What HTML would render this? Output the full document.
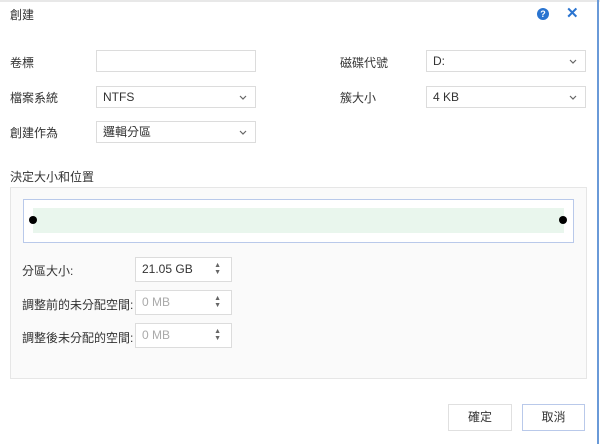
<!DOCTYPE html>
<html><head><meta charset="utf-8"><style>
*{box-sizing:border-box;margin:0;padding:0}
body{width:600px;height:444px;background:#fff;position:relative;overflow:hidden;font-family:"Liberation Sans","Noto Sans CJK TC",sans-serif;font-size:12px;color:#333}
.a{position:absolute}
.in{position:absolute;background:#fff;border:1px solid #dcdcdc;height:22px;line-height:20px;padding-left:6px;font-size:12px}
.ch{position:absolute;right:8px;top:8px}
.sp{position:absolute;right:10px;top:4px;font-size:7px;line-height:7px;color:#666}
.g{color:#aaa}
.btn{position:absolute;height:27px;line-height:25px;text-align:center;background:#fff;border:1px solid #e0e0e0;font-size:12px}
</style></head><body>
<div class="a" style="left:0;top:0;width:600px;height:2px;background:#e8e8e8"></div>
<div class="a" style="left:597px;top:0;width:2px;height:444px;background:#6a9ad8"></div>
<div class="a" style="left:10px;top:6px">創建</div>
<div class="a" style="left:537px;top:8px;width:12px;height:12px;border-radius:50%;background:#2a74d0;color:#fff;font-size:9px;font-weight:bold;text-align:center;line-height:12px">?</div>
<div class="a" style="left:566px;top:4px;color:#2a74d0;font-size:15px;font-weight:bold">✕</div>

<div class="a" style="left:10px;top:54px">卷標</div>
<div class="in" style="left:96px;top:50px;width:160px"></div>
<div class="a" style="left:10px;top:89px">檔案系統</div>
<div class="in" style="left:96px;top:86px;width:160px">NTFS<svg class="ch" width="8" height="5"><path d="M1 1L4 4L7 1" fill="none" stroke="#666" stroke-width="1.2"/></svg></div>
<div class="a" style="left:10px;top:124px">創建作為</div>
<div class="in" style="left:96px;top:121px;width:160px">邏輯分區<svg class="ch" width="8" height="5"><path d="M1 1L4 4L7 1" fill="none" stroke="#666" stroke-width="1.2"/></svg></div>

<div class="a" style="left:340px;top:54px">磁碟代號</div>
<div class="in" style="left:426px;top:50px;width:160px">D:<svg class="ch" width="8" height="5"><path d="M1 1L4 4L7 1" fill="none" stroke="#666" stroke-width="1.2"/></svg></div>
<div class="a" style="left:340px;top:89px">簇大小</div>
<div class="in" style="left:426px;top:86px;width:160px">4 KB<svg class="ch" width="8" height="5"><path d="M1 1L4 4L7 1" fill="none" stroke="#666" stroke-width="1.2"/></svg></div>

<div class="a" style="left:10px;top:168px">決定大小和位置</div>
<div class="a" style="left:10px;top:187px;width:577px;height:192px;background:#fafafa;border:1px solid #e6e6e6"></div>
<div class="a" style="left:23px;top:199px;width:551px;height:44px;background:#fff;border:1px solid #b9c9ea"></div>
<div class="a" style="left:33px;top:208px;width:531px;height:25px;background:#e9f6ed"></div>
<div class="a" style="left:29px;top:216px;width:8px;height:8px;border-radius:50%;background:#000"></div>
<div class="a" style="left:559px;top:216px;width:8px;height:8px;border-radius:50%;background:#000"></div>

<div class="a" style="left:22px;top:262px">分區大小:</div>
<div class="in" style="left:135px;top:257px;width:97px;height:25px;line-height:23px">21.05 GB<span class="sp">▲<br>▼</span></div>
<div class="a" style="left:22px;top:296px">調整前的未分配空間:</div>
<div class="in g" style="left:135px;top:290px;width:97px;height:25px;line-height:23px">0 MB<span class="sp">▲<br>▼</span></div>
<div class="a" style="left:22px;top:329px">調整後未分配的空間:</div>
<div class="in g" style="left:135px;top:323px;width:97px;height:25px;line-height:23px">0 MB<span class="sp">▲<br>▼</span></div>

<div class="btn" style="left:448px;top:404px;width:64px">確定</div>
<div class="btn" style="left:522px;top:404px;width:63px;border-color:#b9c9ea">取消</div>
</body></html>
